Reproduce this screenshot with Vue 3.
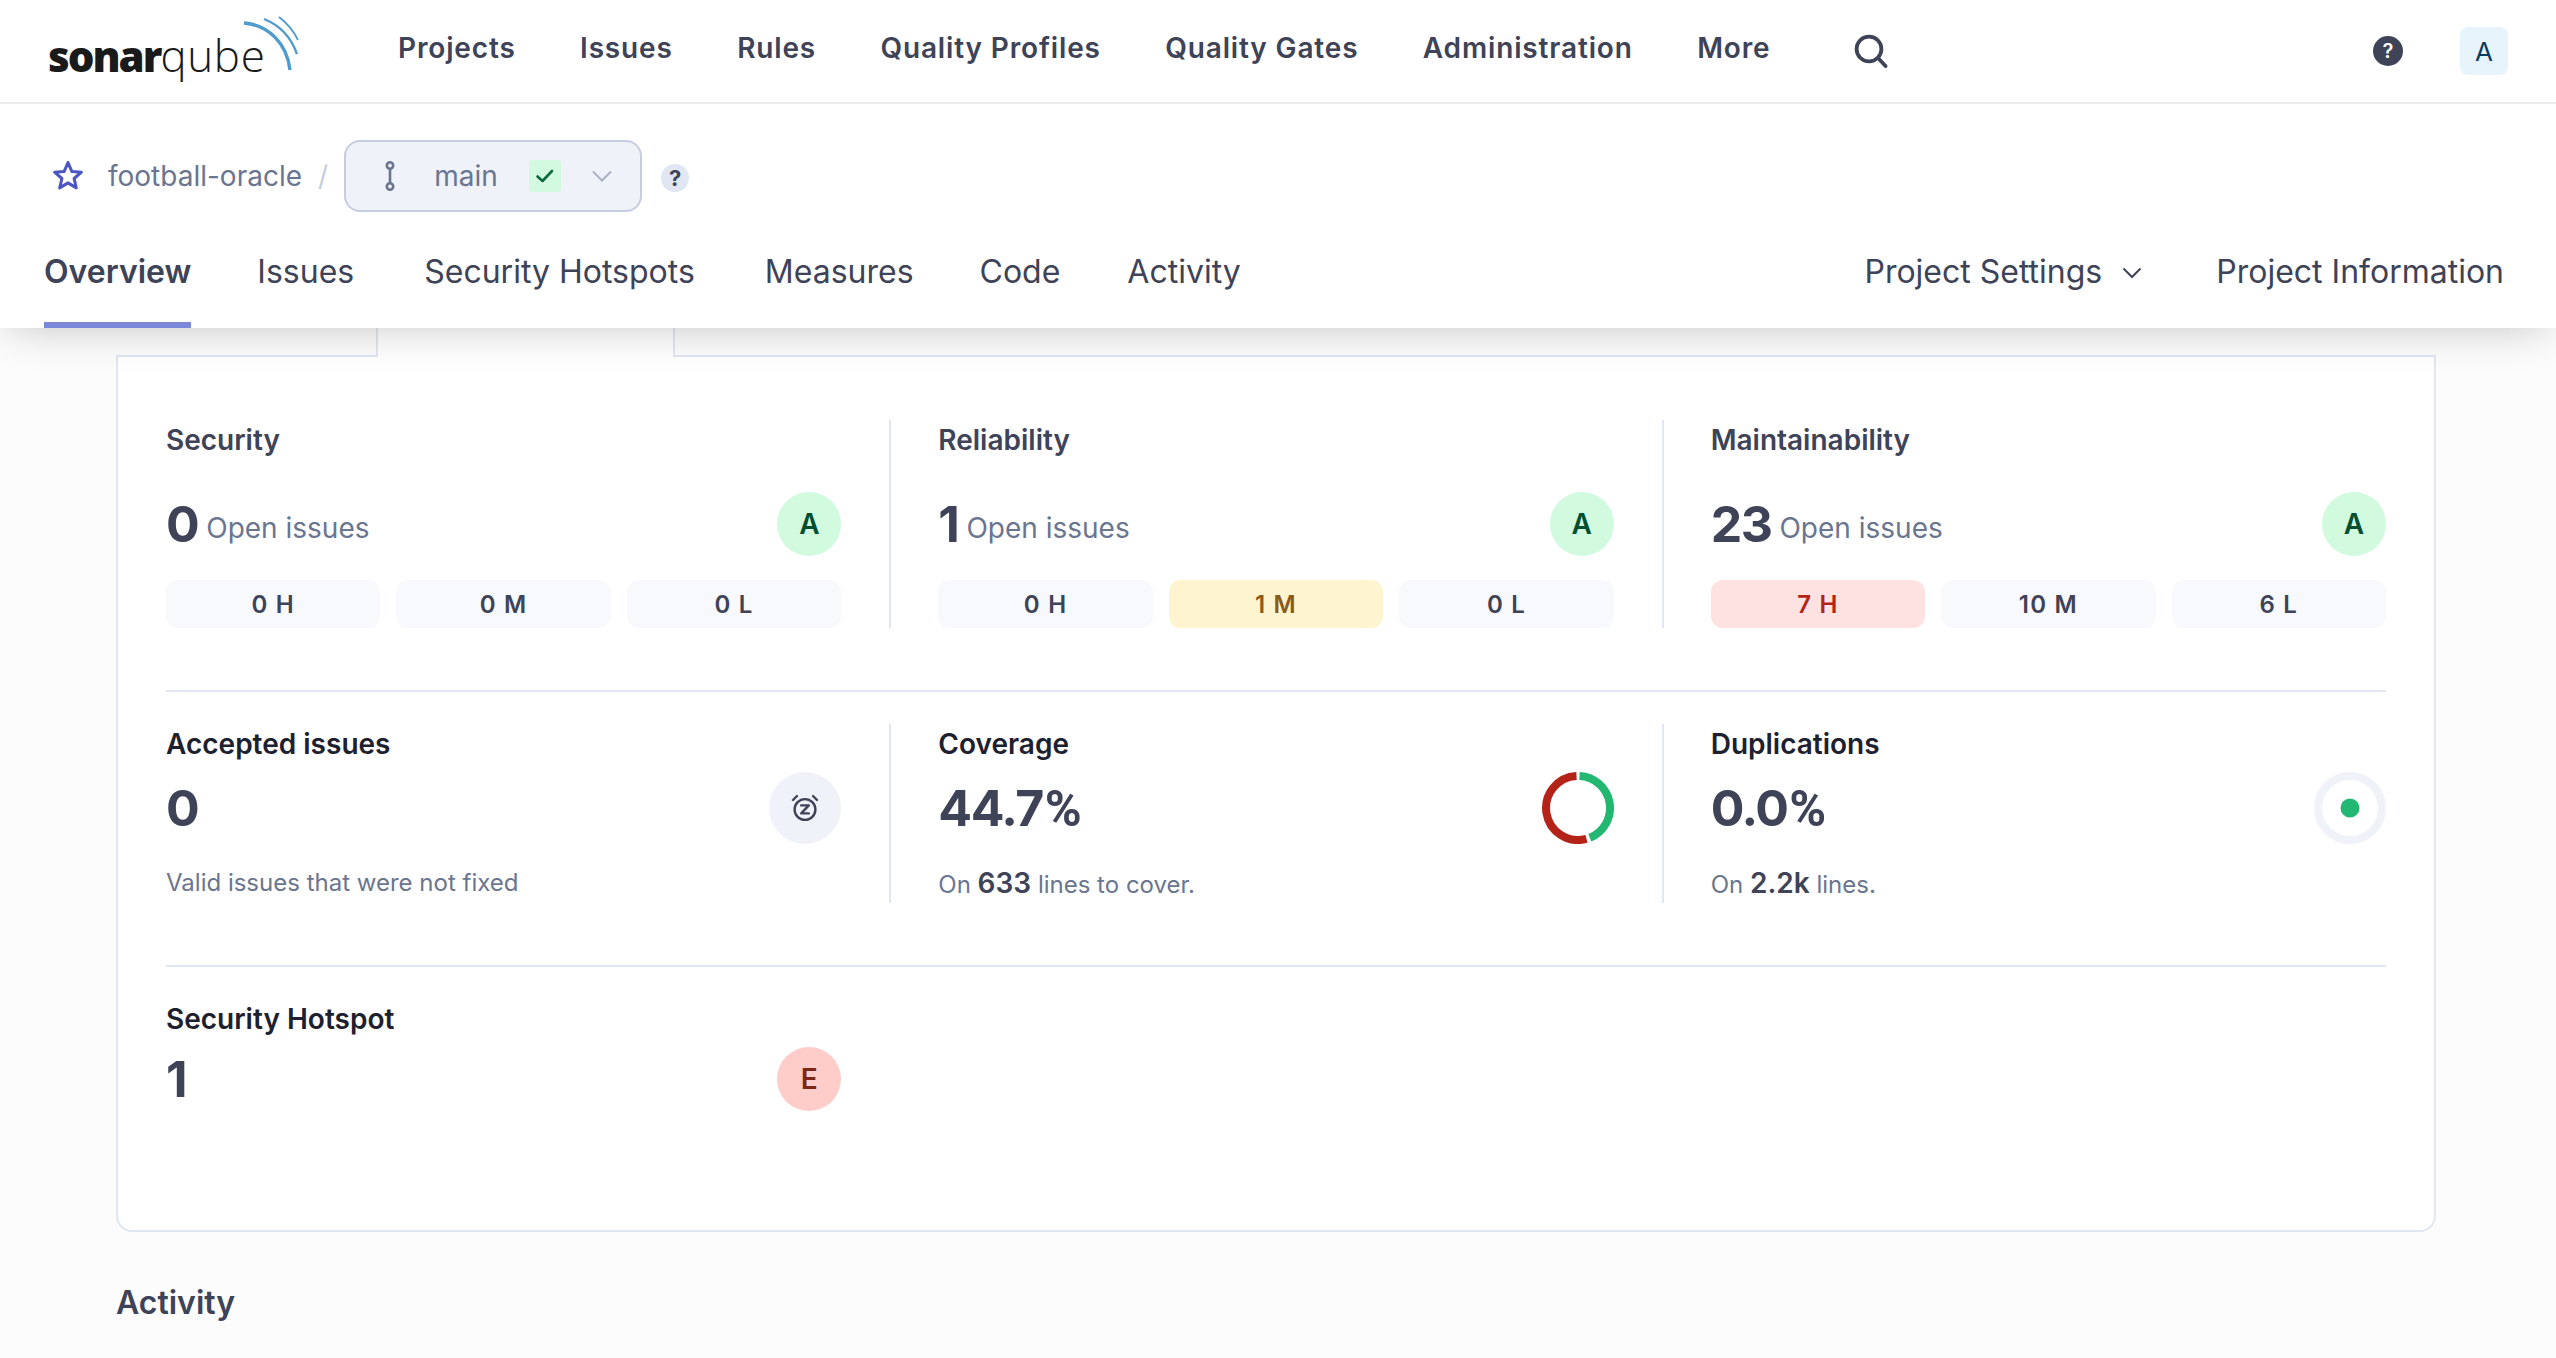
<script setup>
const nav = ['Projects', 'Issues', 'Rules', 'Quality Profiles', 'Quality Gates', 'Administration', 'More']
const tabs = ['Issues', 'Security Hotspots', 'Measures', 'Code', 'Activity']
const measures = [
  { title: 'Security', value: '0', chips: [{ t: '0 H' }, { t: '0 M' }, { t: '0 L' }] },
  { title: 'Reliability', value: '1', chips: [{ t: '0 H' }, { t: '1 M', c: 'warn' }, { t: '0 L' }] },
  { title: 'Maintainability', value: '23', chips: [{ t: '7 H', c: 'bad' }, { t: '10 M' }, { t: '6 L' }] },
]
</script>

<template>
  <div class="page">
    <header class="top">
      <div class="globalbar">
        <div class="logo">
          <span class="logo-text"><b>sonar</b><span class="qube">qube</span></span>
          <svg class="logo-waves" width="60" height="60" viewBox="0 0 60 60" fill="none" stroke="#4e9bcd" stroke-linecap="butt">
            <path d="M3 10 C27 12 46 30 49 57" stroke-width="3.4" />
            <path d="M23 6 C38 12 50 24 56 41" stroke-width="2.4" />
            <path d="M38 4 C46 10 52 17 57 27" stroke-width="1.8" />
          </svg>
        </div>
        <nav class="mainnav">
          <a v-for="n in nav" :key="n">{{ n }}</a>
        </nav>
        <svg class="search" width="34" height="34" viewBox="0 0 34 34" fill="none" stroke="#3e4357" stroke-width="3.8" stroke-linecap="round">
          <circle cx="15" cy="15" r="12.4" />
          <path d="M24 24 L31.5 32" />
        </svg>
        <div class="spacer"></div>
        <span class="help-solid">?</span>
        <span class="avatar">A</span>
      </div>

      <div class="crumbs">
        <svg class="star" width="32" height="30" viewBox="0 0 32 30" fill="none" stroke="#4b55c4" stroke-width="3" stroke-linejoin="round">
          <path d="M16 2.5 L19.8 11.4 L29.4 12.2 L22.1 18.5 L24.3 27.9 L16 22.9 L7.7 27.9 L9.9 18.5 L2.6 12.2 L12.2 11.4 Z" />
        </svg>
        <span class="project">football-oracle</span>
        <span class="slash">/</span>
        <div class="branch">
          <svg width="10" height="30" viewBox="0 0 10 30" fill="none" stroke="#6a7590" stroke-width="2.6">
            <circle cx="5" cy="4.5" r="3.2" />
            <circle cx="5" cy="25.5" r="3.2" />
            <path d="M5 8 V22" />
          </svg>
          <span class="branch-name">main</span>
          <span class="status">
            <svg width="20" height="16" viewBox="0 0 20 16" fill="none" stroke="#0b6b3a" stroke-width="2.6" stroke-linecap="round" stroke-linejoin="round">
              <path d="M2.5 8.5 L7.5 13 L17 3" />
            </svg>
          </span>
          <svg width="20" height="12" viewBox="0 0 20 12" fill="none" stroke="#a9b2c7" stroke-width="2">
            <path d="M1 1.5 L10 10.5 L19 1.5" />
          </svg>
        </div>
        <span class="help-soft">?</span>
      </div>

      <div class="tabs">
        <a class="tab active">Overview</a>
        <a v-for="t in tabs" :key="t" class="tab">{{ t }}</a>
        <div class="spacer"></div>
        <a class="tab settings">Project Settings
          <svg width="20" height="12" viewBox="0 0 20 12" fill="none" stroke="#3e4357" stroke-width="2">
            <path d="M1.5 1.5 L10 10 L18.5 1.5" />
          </svg>
        </a>
        <a class="tab info">Project Information</a>
      </div>
    </header>

    <main class="content">
      <div class="tabstrip">
        <div class="strip-tab first"></div>
        <div class="strip-tab current"></div>
        <div class="strip-rest"></div>
      </div>

      <section class="card">
        <div class="row first-row">
          <template v-for="(m, i) in measures" :key="m.title">
            <div v-if="i" class="vr"></div>
            <div class="cell">
              <h3 class="ttl muted-ttl">{{ m.title }}</h3>
              <div class="main-line issues-line">
                <div class="val-group">
                  <span class="value">{{ m.value }}</span>
                  <span class="open">Open issues</span>
                </div>
                <span class="rating good">A</span>
              </div>
              <div class="chips">
                <span v-for="c in m.chips" :key="c.t" class="chip" :class="c.c">{{ c.t }}</span>
              </div>
            </div>
          </template>
        </div>

        <hr class="hr" />

        <div class="row">
          <div class="cell">
            <h3 class="ttl">Accepted issues</h3>
            <div class="main-line metric-line">
              <span class="value">0</span>
              <span class="round-icon">
                <svg width="30" height="30" viewBox="0 0 30 30" fill="none" stroke="#3e4357" stroke-width="2.4" stroke-linecap="round" stroke-linejoin="round">
                  <circle cx="15" cy="16.5" r="10.4" />
                  <path d="M3 7 L7 3" />
                  <path d="M27 7 L23 3" />
                  <path d="M11.2 12.4 H18.8 L11.2 20.4 H18.8" />
                </svg>
              </span>
            </div>
            <p class="sub">Valid issues that were not fixed</p>
          </div>
          <div class="vr"></div>
          <div class="cell">
            <h3 class="ttl">Coverage</h3>
            <div class="main-line metric-line">
              <span class="value">44.7<span class="pct">%</span></span>
              <svg width="72" height="72" viewBox="0 0 72 72" fill="none" stroke-width="8">
                <path d="M37.5 4.04 A32 32 0 0 1 47.8 65.75" stroke="#23b872" />
                <path d="M44.5 66.87 A32 32 0 1 1 34.5 4.04" stroke="#b42318" />
              </svg>
            </div>
            <p class="sub">On <b>633</b> lines to cover.</p>
          </div>
          <div class="vr"></div>
          <div class="cell">
            <h3 class="ttl">Duplications</h3>
            <div class="main-line metric-line">
              <span class="value">0.0<span class="pct">%</span></span>
              <svg width="72" height="72" viewBox="0 0 72 72" fill="none">
                <circle cx="36" cy="36" r="32" stroke="#eff2f9" stroke-width="8" />
                <circle cx="36" cy="36" r="9.5" fill="#23b872" />
              </svg>
            </div>
            <p class="sub">On <b>2.2k</b> lines.</p>
          </div>
        </div>

        <hr class="hr" />

        <div class="row last-row">
          <div class="cell">
            <h3 class="ttl">Security Hotspot</h3>
            <div class="main-line hotspot-line">
              <span class="value">1</span>
              <span class="rating worst">E</span>
            </div>
          </div>
          <div class="vr blank"></div>
          <div class="cell"></div>
          <div class="vr blank"></div>
          <div class="cell"></div>
        </div>
      </section>

      <h2 class="activity">Activity</h2>
    </main>
  </div>
</template>

<style scoped>
.page {
  min-height: 1358px;
  font-family: Inter, "Liberation Sans", sans-serif;
  color: #3e4357;
}
.top {
  position: relative;
  z-index: 2;
  background: #fff;
  height: 328px;
  box-shadow: 0 8px 40px -8px rgba(0, 0, 0, 0.22);
}
.globalbar {
  height: 102px;
  box-sizing: content-box;
  border-bottom: 2px solid #ebebeb;
  display: flex;
  align-items: center;
  padding: 0 48px;
}
.logo {
  position: relative;
  width: 350px;
  height: 102px;
  flex: none;
}
.logo-text {
  position: absolute;
  left: 0;
  top: 28px;
  font-family: "Open Sans", sans-serif;
  font-size: 42px;
  line-height: 54px;
  color: #1a1a1a;
  font-weight: 300;
}
.logo-text b {
  font-weight: 800;
  letter-spacing: -2px;
}
.logo-text .qube {
  font-size: 44px;
  letter-spacing: 0.6px;
}
.logo-waves {
  position: absolute;
  left: 193px;
  top: 13px;
}
.mainnav {
  display: flex;
  gap: 64.4px;
  margin-top: -6px;
}
.mainnav a {
  font-size: 28px;
  line-height: 40px;
  font-weight: 600;
  letter-spacing: 0.85px;
  color: #3e4357;
}
.search {
  margin-left: 84px;
  flex: none;
}
.spacer {
  flex: 1;
}
.help-solid {
  width: 30px;
  height: 30px;
  border-radius: 50%;
  background: #3e4357;
  color: #fff;
  font-size: 20px;
  font-weight: 600;
  display: flex;
  align-items: center;
  justify-content: center;
  margin-right: 57px;
}
.avatar {
  width: 48px;
  height: 48px;
  border-radius: 8px;
  background: #e8f4fb;
  color: #0b3c5d;
  font-size: 26px;
  display: flex;
  align-items: center;
  justify-content: center;
}
.crumbs {
  height: 144px;
  display: flex;
  align-items: center;
  padding-left: 52px;
}
.star {
  flex: none;
  margin-right: 24px;
  margin-top: -3px;
}
.project {
  font-size: 28px;
  color: #6a7590;
  line-height: 40px;
}
.slash {
  font-size: 28px;
  color: #c5cde0;
  margin: 0 16px 0 16px;
}
.branch {
  box-sizing: border-box;
  width: 298px;
  height: 72px;
  border: 2px solid #c5cde0;
  border-radius: 16px;
  background: #eff2f9;
  display: flex;
  align-items: center;
  padding-left: 39px;
}
.branch-name {
  font-size: 28px;
  color: #6a7590;
  margin-left: 39px;
  width: 95px;
}
.status {
  width: 32px;
  height: 32px;
  border-radius: 4px;
  background: #d1fadf;
  display: flex;
  align-items: center;
  justify-content: center;
  margin-right: 31px;
}
.help-soft {
  width: 28px;
  height: 28px;
  border-radius: 50%;
  background: #e1e6f3;
  color: #3e4357;
  font-size: 22px;
  font-weight: 700;
  display: flex;
  align-items: center;
  justify-content: center;
  margin: 4px 0 0 19px;
}
.tabs {
  height: 80px;
  display: flex;
  padding: 0 52px 0 44px;
}
.tab {
  font-size: 32px;
  line-height: 44px;
  padding-top: 2px;
  margin-right: 70px;
  color: #3e4357;
  white-space: nowrap;
}
.tab:nth-child(4) {
  margin-right: 66px;
}
.tab:nth-child(5) {
  margin-right: 67px;
}
.tab.active {
  font-weight: 600;
  height: 80px;
  box-sizing: border-box;
  border-bottom: 6px solid #7b87d9;
  margin-right: 66px;
}
.tab.settings {
  display: flex;
  align-items: flex-start;
  gap: 20px;
  margin-right: 74px;
}
.tab.settings svg {
  margin-top: 17px;
}
.tab.info {
  margin-right: 0;
}
.content {
  padding: 0 120px 0 116px;
}
.tabstrip {
  display: flex;
  height: 27px;
  position: relative;
  z-index: 1;
}
.strip-tab {
  box-sizing: border-box;
  height: 29px;
  border-right: 2px solid #e1e6f3;
}
.strip-tab.first {
  width: 262px;
  border-bottom: 2px solid #e1e6f3;
}
.strip-tab.current {
  width: 297px;
  background: #fff;
  border-right: 2px solid #e1e6f3;
}
.strip-rest {
  flex: 1;
}
.card {
  box-sizing: border-box;
  height: 877px;
  border: 2px solid #e1e6f3;
  border-radius: 0 0 16px 16px;
  background: #fff;
  padding: 63px 48px 0;
}
.row {
  display: flex;
  align-items: stretch;
}
.first-row {
  height: 208px;
}
.cell {
  flex: 1 1 0;
  min-width: 0;
}
.vr {
  width: 2px;
  flex: none;
  background: #e1e6f3;
  margin: 0 47px 0 48px;
}
.vr.blank {
  background: transparent;
}
.ttl {
  margin: 0;
  font-size: 28px;
  line-height: 40px;
  font-weight: 600;
  color: #1d212f;
}
.muted-ttl {
  color: #3e4357;
}
.main-line {
  display: flex;
  justify-content: space-between;
  align-items: center;
}
.issues-line {
  margin-top: 32px;
  height: 64px;
}
.metric-line {
  margin-top: 8px;
  height: 72px;
}
.hotspot-line {
  margin-top: 8px;
  height: 64px;
}
.val-group {
  display: flex;
  align-items: center;
  gap: 8px;
}
.value {
  font-size: 50px;
  line-height: 60px;
  font-weight: 650;
  letter-spacing: -1.5px;
  color: #3e4357;
}
.pct {
  font-family: Roboto, Inter, sans-serif;
  font-weight: 700;
  letter-spacing: 0;
  margin-left: 2px;
}
.open {
  font-size: 28px;
  line-height: 40px;
  padding-top: 8px;
  color: #6a7590;
}
.rating {
  width: 64px;
  height: 64px;
  border-radius: 50%;
  font-size: 28px;
  font-weight: 600;
  display: flex;
  align-items: center;
  justify-content: center;
}
.rating.good {
  background: #d1fadf;
  color: #054f31;
}
.rating.worst {
  background: #fecdca;
  color: #7a271a;
}
.chips {
  display: flex;
  gap: 16px;
  margin-top: 24px;
}
.chip {
  flex: 1 1 0;
  height: 48px;
  border-radius: 12px;
  background: #f7f9fc;
  font-size: 24px;
  font-weight: 600;
  letter-spacing: 1.2px;
  display: flex;
  align-items: center;
  justify-content: center;
  color: #3e4357;
}
.chip.warn {
  background: #fef4d0;
  color: #8a5a1a;
}
.chip.bad {
  background: #fee2e2;
  color: #b42318;
}
.hr {
  border: 0;
  height: 2px;
  background: #e1e6f3;
  margin: 62px 0 32px;
}
.round-icon {
  width: 72px;
  height: 72px;
  border-radius: 50%;
  background: #eff2f9;
  display: flex;
  align-items: center;
  justify-content: center;
}
.sub {
  margin: 21px 0 0;
  font-size: 24px;
  line-height: 36px;
  color: #6a7590;
}
.sub b {
  font-size: 28px;
  font-weight: 600;
  color: #3e4357;
}
.activity {
  margin: 51px 0 0;
  font-size: 32px;
  line-height: 40px;
  font-weight: 600;
  color: #3e4357;
}
</style>

<style>
html,
body {
  background: #fcfcfd;
  overflow: hidden;
}
</style>
